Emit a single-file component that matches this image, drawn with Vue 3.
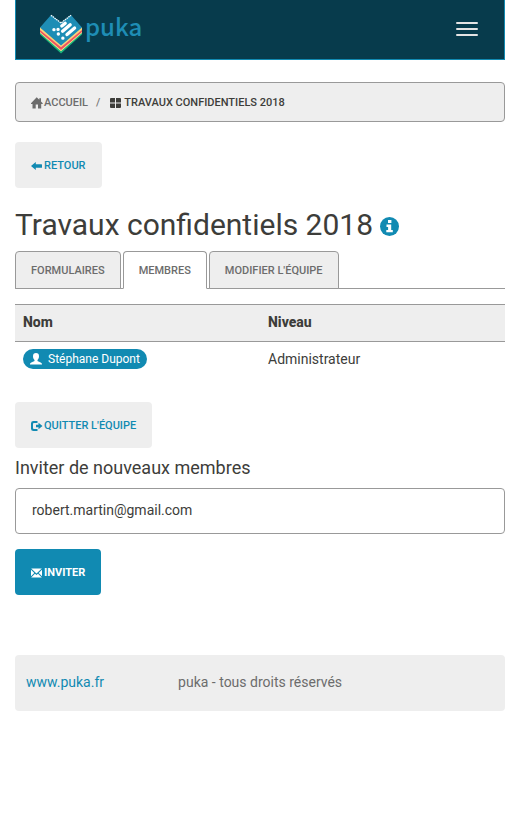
<script setup>
import { ref } from 'vue'

const menuOpen = ref(false)
const email = ref('robert.martin@gmail.com')
const activeTab = ref('Membres')
const tabs = ['Formulaires', 'Membres', "Modifier l'équipe"]
const members = [{ name: 'Stéphane Dupont', level: 'Administrateur' }]
</script>

<template>
  <div class="page">
    <header class="navbar">
      <a class="brand" href="#">
        <svg class="logo" viewBox="0 0 42 40" aria-hidden="true">
          <path fill="#19b37b" d="M0 14v6.500L21 39.500 42 20.500V14L21 30z" />
          <path fill="#fbe28a" d="M0 14v5L21 37.300 42 19v-5L21 30z" />
          <path fill="#ef5361" d="M0 14v4L21 36 42 18v-4L21 30z" />
          <path fill="#fbd27a" d="M0 13v3L21 33.300 42 16v-3L21 28z" />
          <path fill="#1e8db5" d="M0 13.500 11 1l10 8L31 1l11 12.500L21 31.500z" />
          <path fill="none" stroke="#f4fafc" stroke-width="1.300" stroke-dasharray="1.600 .6" d="M11 1.200 21 9l10-7.800" />
          <g stroke="#fff" stroke-width="3.300" stroke-linecap="round">
            <path d="M21.800 12 25.200 9.200M22.600 17.300l7.600-6.500M27 20.600l7.600-6.500" />
            <path d="M18 15.400h.1M13.900 15.700h.1M18.300 20h.1M22.800 24.200h.1" />
          </g>
        </svg>
        <span class="brand-name">puka</span>
      </a>
      <button class="menu-toggle" type="button" aria-label="Menu" :aria-expanded="menuOpen" @click="menuOpen = !menuOpen">
        <span class="bar"></span><span class="bar"></span><span class="bar"></span>
      </button>
    </header>

    <nav class="breadcrumb" aria-label="Fil d'Ariane">
      <a class="crumb" href="#">
        <svg class="icon" viewBox="0 0 12 12" aria-hidden="true"><path d="M5.700.300 8.300 2.800V1.200H10v3.200L11.700 6.200V7H10.200V11.500H7V7.500H4.700V11.500H1.500V7H0V6.200z" /></svg>
        Accueil
      </a>
      <span class="separator">/</span>
      <span class="crumb current">
        <svg class="icon" viewBox="0 0 12 12" aria-hidden="true"><path d="M1 1h4v4.500H0V2q0-1 1-1zM6 1h4q1 0 1 1v3.500H6zM0 6.500h5V11H1q-1 0-1-1zM6 6.500h5V10q0 1-1 1H6z" /></svg>
        Travaux confidentiels 2018
      </span>
    </nav>

    <a class="button" href="#">
      <svg class="icon" viewBox="0 0 12 12" aria-hidden="true"><path d="M0 6 4.800 2v2.300h5.700q.5 0 .5.500v2.400q0 .5-.5.500H4.800V10z" /></svg>
      Retour
    </a>

    <main>
      <h1>
        Travaux confidentiels 2018
        <svg class="info" viewBox="0 0 20 20" role="img" aria-label="Informations">
          <circle cx="9.500" cy="9.500" r="9.500" fill="#118ab2" />
          <path fill="#fff" d="M8 3h3.400v3H8zM6.500 7.500h4.700V13h1.600v2.300H6.300V13h1.800v-3H6.500z" />
        </svg>
      </h1>

      <div class="tabs" role="tablist">
        <button
          v-for="tab in tabs"
          :key="tab"
          class="tab"
          :class="{ active: tab === activeTab }"
          type="button"
          role="tab"
          :aria-selected="tab === activeTab"
          @click="activeTab = tab"
        >{{ tab }}</button>
      </div>

      <table class="members">
        <thead>
          <tr><th scope="col">Nom</th><th scope="col">Niveau</th></tr>
        </thead>
        <tbody>
          <tr v-for="member in members" :key="member.name">
            <td>
              <span class="badge">
                <svg class="user" viewBox="0 0 12 12" aria-hidden="true"><path d="M6 0c2 0 3 1.200 3 3.200C9 5 8.300 6 7.500 7v1c.6.900 4.500 1.200 4.500 3v.500H0V11c0-1.800 3.900-2.100 4.500-3V7C3.700 6 3 5 3 3.200 3 1.200 4 0 6 0z" /></svg>
                {{ member.name }}
              </span>
            </td>
            <td>{{ member.level }}</td>
          </tr>
        </tbody>
      </table>

      <button class="button" type="button">
        <svg class="icon" viewBox="0 0 12 12" aria-hidden="true"><path d="M6.500 1v1.900H3q-1 0-1 1v4.200q0 1 1 1h3.500V11h-4Q0 11 0 8.700V3.300Q0 1 2.500 1zM7.500 2.800 11.500 6l-4 3.200V7.200H5V4.800h2.500z" /></svg>
        Quitter l'équipe
      </button>

      <form @submit.prevent>
        <label class="invite-label" for="invite-email">Inviter de nouveaux membres</label>
        <input id="invite-email" v-model="email" class="field" type="text" autocomplete="off" />
        <button class="button primary" type="submit">
          <svg class="icon" viewBox="0 0 12 12" aria-hidden="true"><path d="M.2 1.500h10.600L5.500 6.500zM0 2.700 3.300 6 0 9.200zM11 2.700 7.700 6 11 9.200zM4 6.700l1.500 1.400L7 6.700l3.800 3.800H.2z" /></svg>
          Inviter
        </button>
      </form>
    </main>

    <footer class="footer">
      <a href="#">www.puka.fr</a>
      <span>puka - tous droits réservés</span>
    </footer>
  </div>
</template>

<style>
body {
  background: #fff;
}
</style>

<style scoped>
.page {
  padding: 0 15px;
  font-family: Roboto, sans-serif;
  font-size: 14px;
  line-height: 20px;
  color: #3d3d3a;
}

.page * {
  box-sizing: border-box;
}

a {
  color: #118ab2;
  text-decoration: none;
}

.navbar {
  display: flex;
  justify-content: space-between;
  align-items: flex-start;
  height: 60px;
  margin-bottom: 22px;
  padding: 14px 16px 0 24px;
  background: #073b4c;
  border: solid #118ab2;
  border-width: 0 1px 1px;
}

.brand {
  display: flex;
  gap: 3px;
}

.logo {
  width: 42px;
  height: 40px;
}

.brand-name {
  font-family: "Noto Sans CJK SC", sans-serif;
  font-size: 24px;
  font-weight: 500;
  line-height: 24px;
  color: #1e8db5;
}

.menu-toggle {
  display: grid;
  gap: 4px;
  padding: 8px 10px;
  background: none;
  border: 0;
}

.bar {
  width: 22px;
  height: 2px;
  border-radius: 1px;
  background: #e4e4e4;
}

.breadcrumb {
  display: flex;
  align-items: center;
  gap: 8px;
  height: 40px;
  margin-bottom: 20px;
  padding: 1px 15px 0;
  font-size: 11px;
  font-weight: 500;
  text-transform: uppercase;
  color: #777;
  background: #eee;
  border: 1px solid #999;
  border-radius: 4px;
}

.crumb {
  display: flex;
  align-items: center;
  gap: 1px;
  color: #6c6c6c;
}

.current {
  gap: 2px;
  margin-left: 2px;
  color: #3d3d3a;
}

.icon {
  width: 12px;
  height: 12px;
  fill: currentColor;
}

.button {
  display: inline-flex;
  align-items: center;
  gap: 1px;
  height: 46px;
  padding: 1px 16px 0;
  font: 500 11px/20px Roboto, sans-serif;
  text-transform: uppercase;
  color: #118ab2;
  background: #eee;
  border: 0;
  border-radius: 4px;
  vertical-align: top;
}

.primary {
  font-weight: 700;
  color: #fff;
  background: #118ab2;
}

h1 {
  display: flex;
  align-items: center;
  gap: 7px;
  margin: 20px 0 10px;
  font-size: 30px;
  font-weight: 400;
  line-height: 33px;
}

.info {
  width: 20px;
  height: 20px;
  margin-top: 4px;
}

.tabs {
  display: flex;
  gap: 2px;
  margin-bottom: 15px;
  border-bottom: 1px solid #999;
}

.tab {
  height: 38px;
  margin-bottom: -1px;
  padding: 1px 15px 0;
  font: 500 11px/20px Roboto, sans-serif;
  text-transform: uppercase;
  color: #6c6c6c;
  background: #eee;
  border: 1px solid #999;
  border-radius: 4px 4px 0 0;
}

.active {
  background: #fff;
  border-bottom-color: #fff;
}

.members {
  width: 100%;
  margin-bottom: 24px;
  border-collapse: collapse;
}

.members th,
.members td {
  width: 50%;
  padding: 7px 8px 9px;
  text-align: left;
}

.members th {
  font-weight: 800;
  background: #eee;
  border: solid #999;
  border-width: 1px 0;
}

.badge {
  display: inline-flex;
  align-items: center;
  gap: 6px;
  height: 20px;
  padding: 0 7px;
  font-size: 12px;
  color: #fff;
  background: #118ab2;
  border-radius: 10px;
  vertical-align: top;
}

.user {
  width: 12px;
  height: 12px;
  fill: currentColor;
}

.invite-label {
  display: block;
  margin: 10px 0;
  font-size: 18px;
}

.field {
  display: block;
  width: 100%;
  height: 46px;
  margin-bottom: 15px;
  padding: 0 16px 2px;
  font: 14px/20px Roboto, sans-serif;
  color: #3d3d3a;
  background: #fff;
  border: 1px solid #999;
  border-radius: 4px;
}

.footer {
  display: grid;
  grid-template-columns: 31% 1fr;
  gap: 7px;
  align-items: center;
  height: 56px;
  margin-top: 60px;
  padding: 0 11px 2px;
  color: #6c6c6c;
  background: #eee;
  border-radius: 4px;
}
</style>
